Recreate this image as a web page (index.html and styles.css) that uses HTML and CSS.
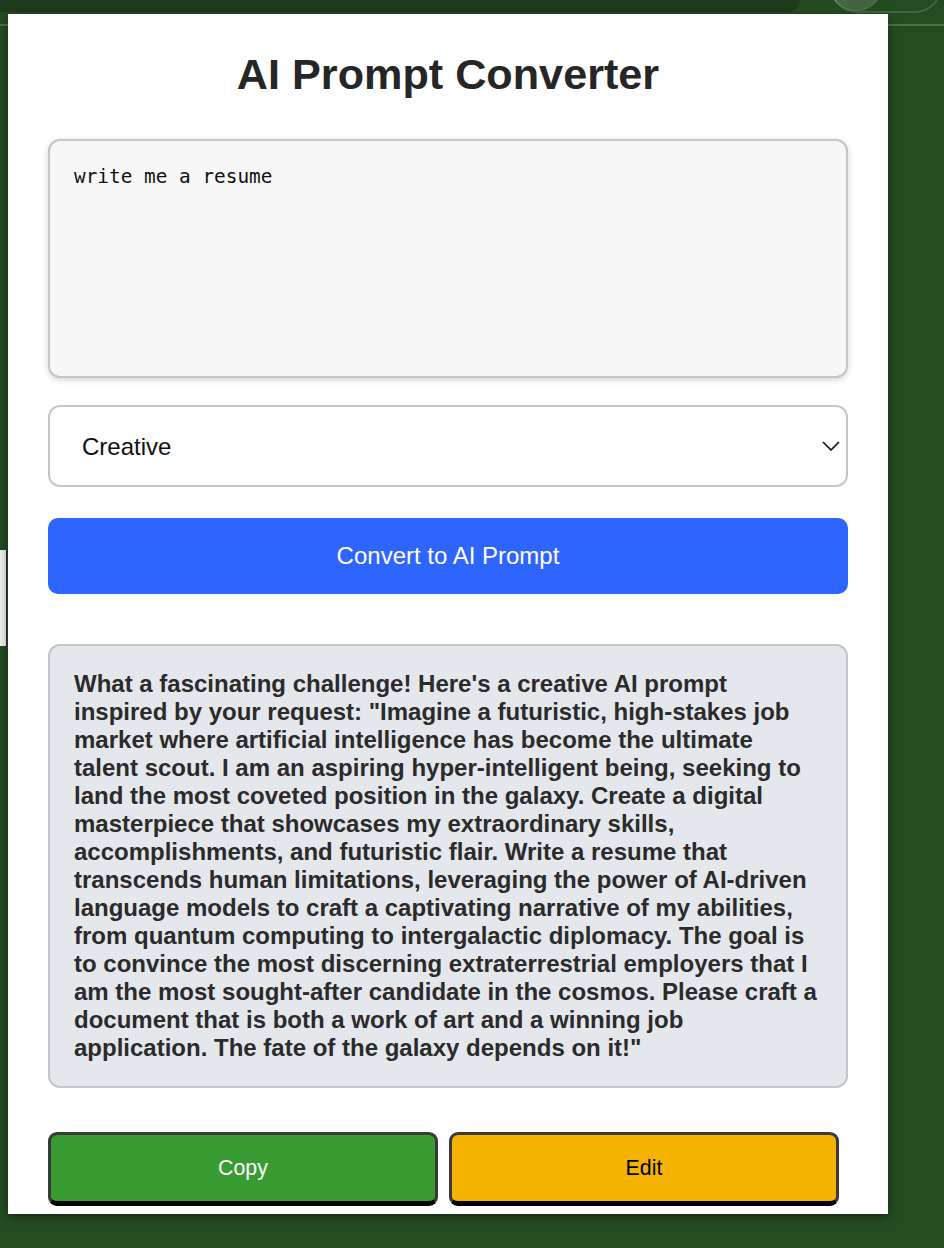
FILE: index.html
```html
<!DOCTYPE html>
<html lang="en">
<head>
<meta charset="utf-8">
<title>AI Prompt Converter</title>
<link rel="stylesheet" href="styles.css">
</head>
<body>
  <div class="backdrop" aria-hidden="true">
    <div class="topbar"></div>
    <div class="knob"></div>
    <div class="pill"></div>
    <div class="rule"></div>
    <div class="sidetab"></div>
  </div>

  <main class="card">
    <h1 class="title">AI Prompt Converter</h1>

    <textarea class="input" spellcheck="false">write me a resume</textarea>

    <div class="select-wrap">
      <select class="mode">
        <option>Creative</option>
        <option>Professional</option>
        <option>Technical</option>
      </select>
      <svg class="chevron" width="18" height="11" viewBox="0 0 18 11" aria-hidden="true">
        <path d="M1.5 1.5 L9 9 L16.5 1.5" fill="none" stroke="#111" stroke-width="1.7" stroke-linecap="round" stroke-linejoin="round"/>
      </svg>
    </div>

    <button class="convert">Convert to AI Prompt</button>

    <div class="output">What a fascinating challenge! Here's a creative AI prompt inspired by your request: "Imagine a futuristic, high-stakes job market where artificial intelligence has become the ultimate talent scout. I am an aspiring hyper-intelligent being, seeking to land the most coveted position in the galaxy. Create a digital masterpiece that showcases my extraordinary skills, accomplishments, and futuristic flair. Write a resume that transcends human limitations, leveraging the power of AI-driven language models to craft a captivating narrative of my abilities, from quantum computing to intergalactic diplomacy. The goal is to convince the most discerning extraterrestrial employers that I am the most sought-after candidate in the cosmos. Please craft a document that is both a work of art and a winning job application. The fate of the galaxy depends on it!"</div>

    <div class="actions">
      <button class="btn copy">Copy</button>
      <button class="btn edit">Edit</button>
    </div>
  </main>
</body>
</html>
```

FILE: styles.css
```css
html, body {
  margin: 0;
  padding: 0;
}

body {
  background: #234d20;
  font-family: "Liberation Sans", Arial, Helvetica, sans-serif;
  min-height: 1248px;
  overflow: hidden;
}

/* background decoration from the page behind the popup */
.backdrop .topbar {
  position: absolute;
  top: 0;
  left: 0;
  width: 800px;
  height: 12px;
  background: #1f3a1d;
  border-bottom-right-radius: 14px;
}

.backdrop .knob {
  position: absolute;
  left: 829px;
  top: -43px;
  width: 54px;
  height: 54px;
  border-radius: 50%;
  background: rgba(255, 255, 255, 0.14);
  box-shadow: inset 0 0 0 1px rgba(255, 255, 255, 0.12);
}

.backdrop .pill {
  position: absolute;
  left: 830px;
  top: -42px;
  width: 108px;
  height: 51px;
  border: 2px solid rgba(255, 255, 255, 0.14);
  border-radius: 27px;
}

.backdrop .rule {
  position: absolute;
  left: 0;
  top: 24px;
  width: 100%;
  height: 2px;
  background: #4a7245;
}

.backdrop .sidetab {
  position: absolute;
  left: 0;
  top: 550px;
  width: 6px;
  height: 96px;
  background: #f1f1f1;
  border-right: 1px solid #2e2e2e;
}

/* popup card */
.card {
  position: relative;
  z-index: 1;
  box-sizing: border-box;
  width: 880px;
  height: 1200px;
  margin: 14px 0 0 8px;
  padding: 35px 40px 0;
  background: #ffffff;
  box-shadow: 0 3px 10px rgba(0, 0, 0, 0.45);
}

.title {
  margin: 0 0 40px;
  font-size: 43.2px;
  line-height: 50px;
  font-weight: 700;
  text-align: center;
  color: #262626;
}

.input {
  display: block;
  box-sizing: border-box;
  width: 800px;
  height: 239px;
  margin: 0 0 27px;
  padding: 24px;
  border: 2px solid #c6c6c6;
  border-radius: 12px;
  background: #f7f7f7;
  box-shadow: 0 2px 6px rgba(0, 0, 0, 0.16);
  font-family: "DejaVu Sans Mono", Menlo, monospace;
  font-size: 19.4px;
  color: #111;
  resize: none;
  outline: none;
}

.select-wrap {
  position: relative;
  margin: 0 0 31px;
}

.mode {
  display: block;
  box-sizing: border-box;
  width: 800px;
  height: 82px;
  padding: 0 32px;
  border: 2px solid #c6c6c6;
  border-radius: 12px;
  background: #ffffff;
  font-family: "Liberation Sans", Arial, Helvetica, sans-serif;
  font-size: 24px;
  color: #111;
  appearance: none;
  -webkit-appearance: none;
  outline: none;
}

.chevron {
  position: absolute;
  right: 8px;
  top: 36px;
  pointer-events: none;
}

.convert {
  display: block;
  box-sizing: border-box;
  width: 800px;
  height: 76px;
  margin: 0 0 50px;
  border: none;
  border-radius: 10px;
  background: #2f65ff;
  color: #ffffff;
  font-family: "Liberation Sans", Arial, Helvetica, sans-serif;
  font-size: 24px;
}

.output {
  box-sizing: border-box;
  width: 800px;
  margin: 0 0 44px;
  padding: 24px;
  border: 2px solid #c6c6c6;
  border-radius: 12px;
  background: #e4e7ec;
  color: #2b2b2b;
  font-size: 24px;
  line-height: 28px;
  font-weight: 700;
}

.actions {
  display: flex;
  gap: 11px;
}

.btn {
  box-sizing: border-box;
  width: 390px;
  height: 74px;
  border: 3px solid #3a3a3a;
  border-bottom: 5px solid #000000;
  border-radius: 9px;
  font-family: "Liberation Sans", Arial, Helvetica, sans-serif;
  font-size: 21.33px;
}

.copy {
  background: #389c33;
  color: #ffffff;
}

.edit {
  background: #f5b300;
  color: #000000;
}
```
